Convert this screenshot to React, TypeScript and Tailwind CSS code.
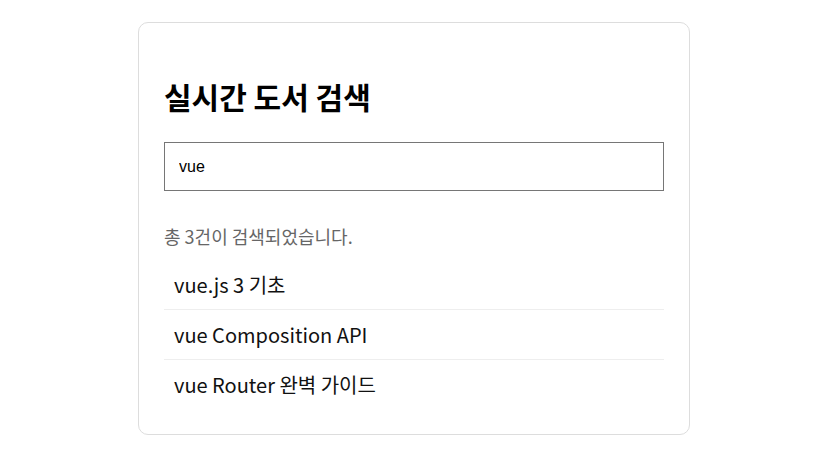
const books = ["vue.js 3 기초", "vue Composition API", "vue Router 완벽 가이드"];

export default function App() {
  return (
    <div className="min-h-screen bg-white pt-[22px] pl-[138px] font-['Noto_Sans_CJK_KR','Noto_Sans',sans-serif]">
      <div className="w-[552px] h-[413px] rounded-[10px] border border-[#dddddd] bg-white px-[25px] pt-[25px]">
        <h1 className="mt-[26px] text-[30px] leading-[44px] font-bold text-black">실시간 도서 검색</h1>
        <input
          className="mt-[24px] block w-full h-[49px] border border-[#767676] px-[14px] text-[16px] text-black font-['Liberation_Sans',sans-serif] outline-none"
          defaultValue="vue"
        />
        <p className="mt-[32px] text-[18px] leading-[26px] text-[#666666]">총 {books.length}건이 검색되었습니다.</p>
        <ul className="mt-[11px]">
          {books.map((b) => (
            <li key={b} className="h-[50px] flex items-center px-[10px] text-[20px] text-[#111111] border-b border-[#eeeeee] last:border-b-0">
              {b}
            </li>
          ))}
        </ul>
      </div>
    </div>
  );
}
